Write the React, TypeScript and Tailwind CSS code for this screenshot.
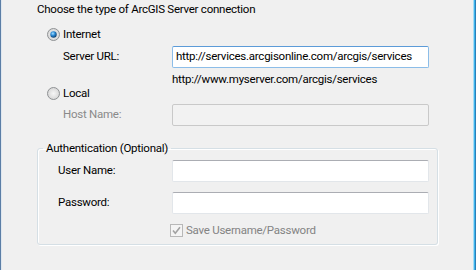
import React from 'react';

function Radio({ id, checked }: { id: string; checked?: boolean }) {
  return (
    <svg width="13" height="13" viewBox="0 0 13 13" className="shrink-0">
      <defs>
        <radialGradient id={`${id}-bg`} cx="50%" cy="50%" r="55%">
          <stop offset="0" stopColor="#f6f6f6" />
          <stop offset="1" stopColor="#d4d4d4" />
        </radialGradient>
        <radialGradient id={`${id}-dot`} cx="40%" cy="35%" r="70%">
          <stop offset="0" stopColor="#a6e1ff" />
          <stop offset="0.45" stopColor="#2b8ad6" />
          <stop offset="1" stopColor="#0b355f" />
        </radialGradient>
      </defs>
      <circle cx="6.5" cy="6.5" r="6" fill={`url(#${id}-bg)`} stroke="#8f9294" />
      {checked && <circle cx="6.5" cy="6.5" r="3.2" fill={`url(#${id}-dot)`} />}
    </svg>
  );
}

function TextBox({ value, focused, disabled }: { value?: string; focused?: boolean; disabled?: boolean }) {
  let cls = 'border-[#e2e6ea] border-t-[#abadb3] bg-white';
  if (focused) cls = 'border-[#8cbde8] border-t-[#5c9bd8] bg-white';
  if (disabled) cls = 'border-[#c9c9c9] bg-[#f2f2f2]';
  return (
    <div className={`flex h-[22px] w-[257px] items-center rounded-[2px] border px-[3px] text-black ${cls}`}>
      {value}
    </div>
  );
}

export default function App() {
  return (
    <div className="flex h-[270px] w-[476px] overflow-hidden bg-[#f0f0f0] font-['Roboto',sans-serif] text-[11.5px] tracking-[-0.25px] text-black">
      <div className="w-[1px] bg-[#5b7ea6]" />
      <div className="w-[1px] bg-[#dfe7ef]" />
      <div className="flex-1 pl-[35px]">
        <div className="h-[18px] leading-[18px]">Choose the type of ArcGIS Server connection</div>

        <div className="ml-[10px] mt-[9px] flex h-[14px] items-center gap-[3px] leading-[14px]">
          <Radio id="r1" checked />
          <span>Internet</span>
        </div>

        <div className="mt-[5px] flex items-center">
          <span className="ml-[26px] w-[109px]">Server URL:</span>
          <TextBox value="http://services.arcgisonline.com/arcgis/services" focused />
        </div>

        <div className="ml-[135px] mt-[4px] h-[14px] leading-[14px]">http://www.myserver.com/arcgis/services</div>

        <div className="ml-[10px] flex h-[14px] items-center gap-[3px] leading-[14px]">
          <Radio id="r2" />
          <span>Local</span>
        </div>

        <div className="mt-[4px] flex items-center">
          <span className="ml-[26px] w-[109px] text-[#8a8a8a]">Host Name:</span>
          <TextBox disabled />
        </div>

        <fieldset className="mt-[14px] w-[401px] rounded-[3px] border border-[#d5dfe5] pb-[7px] shadow-[inset_1px_1px_0_#fff,1px_1px_0_#fff]">
          <legend className="ml-[5px] px-[3px] leading-[16px]">Authentication (Optional)</legend>
          <div className="mt-[4px] flex items-center">
            <span className="ml-[20px] w-[114px]">User Name:</span>
            <TextBox />
          </div>
          <div className="mt-[10px] flex items-center">
            <span className="ml-[20px] w-[114px]">Password:</span>
            <TextBox />
          </div>
          <div className="ml-[132px] mt-[10px] flex h-[13px] items-center gap-[3px] text-[#838383]">
            <svg width="13" height="13" viewBox="0 0 13 13" className="shrink-0">
              <rect x="0.5" y="0.5" width="12" height="12" fill="#f4f4f4" stroke="#b8b8b8" />
              <path d="M3 6.5 L5.3 9.2 L10 3.2" fill="none" stroke="#a2a2a2" strokeWidth="1.6" />
            </svg>
            <span>Save Username/Password</span>
          </div>
        </fieldset>
      </div>
      <div className="w-[1px] bg-[#a8dcf5]" />
      <div className="w-[1px] bg-[#3bb4ec]" />
      <div className="w-[1px] bg-[#2d7fb8]" />
    </div>
  );
}
